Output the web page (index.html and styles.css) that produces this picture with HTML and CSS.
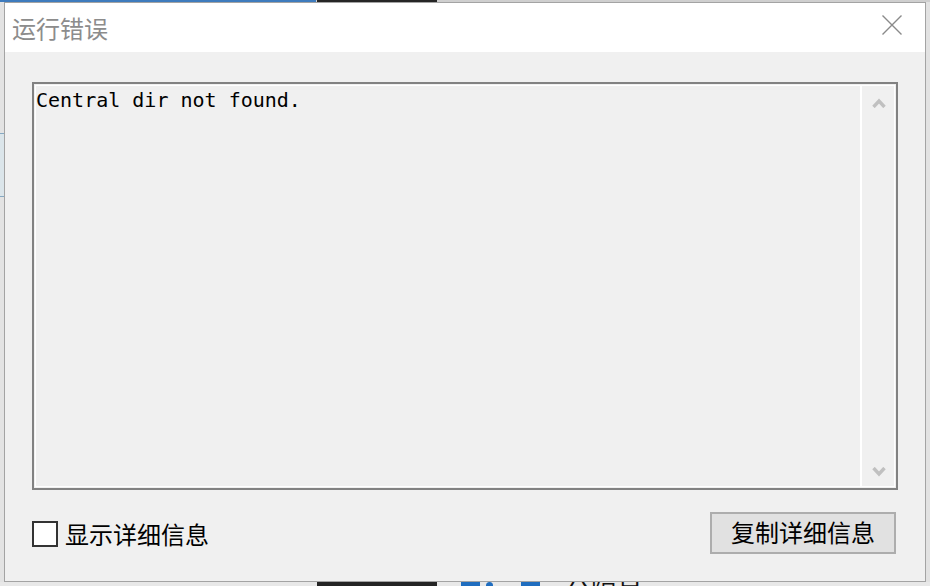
FILE: index.html
```html
<!DOCTYPE html>
<html lang="zh-CN">
<head>
    <meta charset="UTF-8">
    <meta name="viewport" content="width=device-width, initial-scale=1.0">
    <title>运行错误</title>
    <link rel="stylesheet" href="styles.css">
</head>
<body>
    <div class="desktop">
        <div class="top-edge">
            <span class="seg-blue"></span>
            <span class="seg-dark"></span>
        </div>
        <div class="middle">
            <div class="left-edge"><span class="edge-panel"></span></div>
            <div class="dialog">
                <div class="titlebar">
                    <span class="title">运行错误</span>
                    <svg class="close" width="20" height="20" viewBox="0 0 20 20">
                        <path d="M0.5 0.5 L19.5 19.5 M19.5 0.5 L0.5 19.5" stroke="#8a8a8a" stroke-width="1.4" fill="none"/>
                    </svg>
                </div>
                <div class="content">
                    <div class="output">
                        <pre class="output-text">Central dir not found.</pre>
                        <div class="scrollbar">
                            <svg width="14" height="10" viewBox="0 0 14 10">
                                <path d="M1.5 9 L7 3 L12.5 9" stroke="#c0c0c0" stroke-width="3.4" fill="none"/>
                            </svg>
                            <svg width="14" height="10" viewBox="0 0 14 10">
                                <path d="M1.5 1 L7 7 L12.5 1" stroke="#c0c0c0" stroke-width="3.4" fill="none"/>
                            </svg>
                        </div>
                    </div>
                    <div class="footer">
                        <label class="check">
                            <input type="checkbox">
                            <span>显示详细信息</span>
                        </label>
                        <button class="copy-btn">复制详细信息</button>
                    </div>
                </div>
            </div>
            <div class="right-edge"></div>
        </div>
        <div class="bottom-edge">
            <span class="bar-dark"></span>
            <span class="tile"></span>
            <span class="dot"></span>
            <span class="tile tile-2"></span>
            <span class="peek">分隔号</span>
        </div>
    </div>
</body>
</html>
```

FILE: styles.css
```css
body {
    margin: 0;
    padding: 0;
    background-color: #e6e6e6;
    font-family: "Noto Sans CJK SC", "Noto Sans", sans-serif;
    overflow: hidden;
}
.desktop {
    width: 930px;
    height: 586px;
    display: flex;
    flex-direction: column;
}
.top-edge {
    height: 2px;
    display: flex;
    background-color: #cfcfcf;
}
.seg-blue {
    width: 316px;
    background-color: #3e7bbd;
}
.seg-dark {
    width: 120px;
    margin-left: 1px;
    background-color: #252525;
}
.middle {
    height: 580px;
    display: flex;
}
.left-edge {
    width: 4px;
    display: flex;
    flex-direction: column;
    background-color: #e3e3e3;
}
.edge-panel {
    margin-top: 131px;
    height: 62px;
    background-color: #dbe5ea;
    border-top: 1px solid #86a9c2;
    border-bottom: 1px solid #86a9c2;
}
.right-edge {
    width: 4px;
    background-color: #e2e2e2;
}
.dialog {
    width: 922px;
    box-sizing: border-box;
    border: 1px solid #a3a3a3;
    background-color: #f0f0f0;
    display: flex;
    flex-direction: column;
    box-shadow: 1px 1px 0 #c6c6c6;
}
.titlebar {
    height: 49px;
    flex-shrink: 0;
    background-color: #fff;
    display: flex;
    align-items: center;
    justify-content: space-between;
    padding: 0 23px 0 7px;
}
.title {
    font-size: 24px;
    line-height: 1;
    color: #8c8c8c;
}
.close {
    margin-bottom: 5px;
}
.content {
    flex: 1;
    display: flex;
    flex-direction: column;
    gap: 22px;
    padding: 30px 27px 27px 27px;
}
.output {
    flex: 1;
    display: flex;
    border: 2px solid #828282;
    background-color: #f0f0f0;
    box-shadow: inset 0 0 0 1px #f0f0f0, inset 0 0 0 2px #fff;
}
.output-text {
    flex: 1;
    margin: 0;
    padding: 5px 2px;
    font-family: "DejaVu Sans Mono", "Liberation Mono", monospace;
    font-size: 20px;
    line-height: 22px;
    color: #000;
}
.scrollbar {
    width: 33px;
    border-left: 2px solid #fff;
    margin: 1px 1px 1px 0;
    display: flex;
    flex-direction: column;
    justify-content: space-between;
    align-items: center;
    padding: 13px 0 10px 0;
}
.footer {
    height: 42px;
    flex-shrink: 0;
    display: flex;
    align-items: center;
    justify-content: space-between;
}
.check {
    display: flex;
    align-items: center;
    gap: 7px;
    font-size: 24px;
    line-height: 1;
    color: #000;
    margin-top: 1px;
}
.check input {
    appearance: none;
    margin: 0;
    width: 26px;
    height: 26px;
    box-sizing: border-box;
    border: 2px solid #333;
    background-color: #fff;
}
.copy-btn {
    width: 186px;
    height: 42px;
    margin-right: 2px;
    border: 2px solid #adadad;
    background-color: #e1e1e1;
    font-family: "Noto Sans CJK SC", "Noto Sans", sans-serif;
    font-size: 24px;
    line-height: 1;
    color: #000;
    padding: 0 0 3px 0;
}
.bottom-edge {
    height: 4px;
    display: flex;
    align-items: flex-start;
    background-color: #e8e8e8;
    overflow: hidden;
}
.bar-dark {
    width: 120px;
    height: 4px;
    margin-left: 317px;
    background-color: #242424;
}
.tile {
    width: 19px;
    height: 4px;
    margin-left: 24px;
    background-color: #1f6dbf;
}
.dot {
    width: 7px;
    height: 7px;
    margin-left: 6px;
    border-radius: 50%;
    background-color: #1f6dbf;
}
.tile-2 {
    margin-left: 28px;
}
.peek {
    margin-left: 25px;
    font-size: 26px;
    line-height: 20px;
    margin-top: -2px;
    color: #111;
}
```
